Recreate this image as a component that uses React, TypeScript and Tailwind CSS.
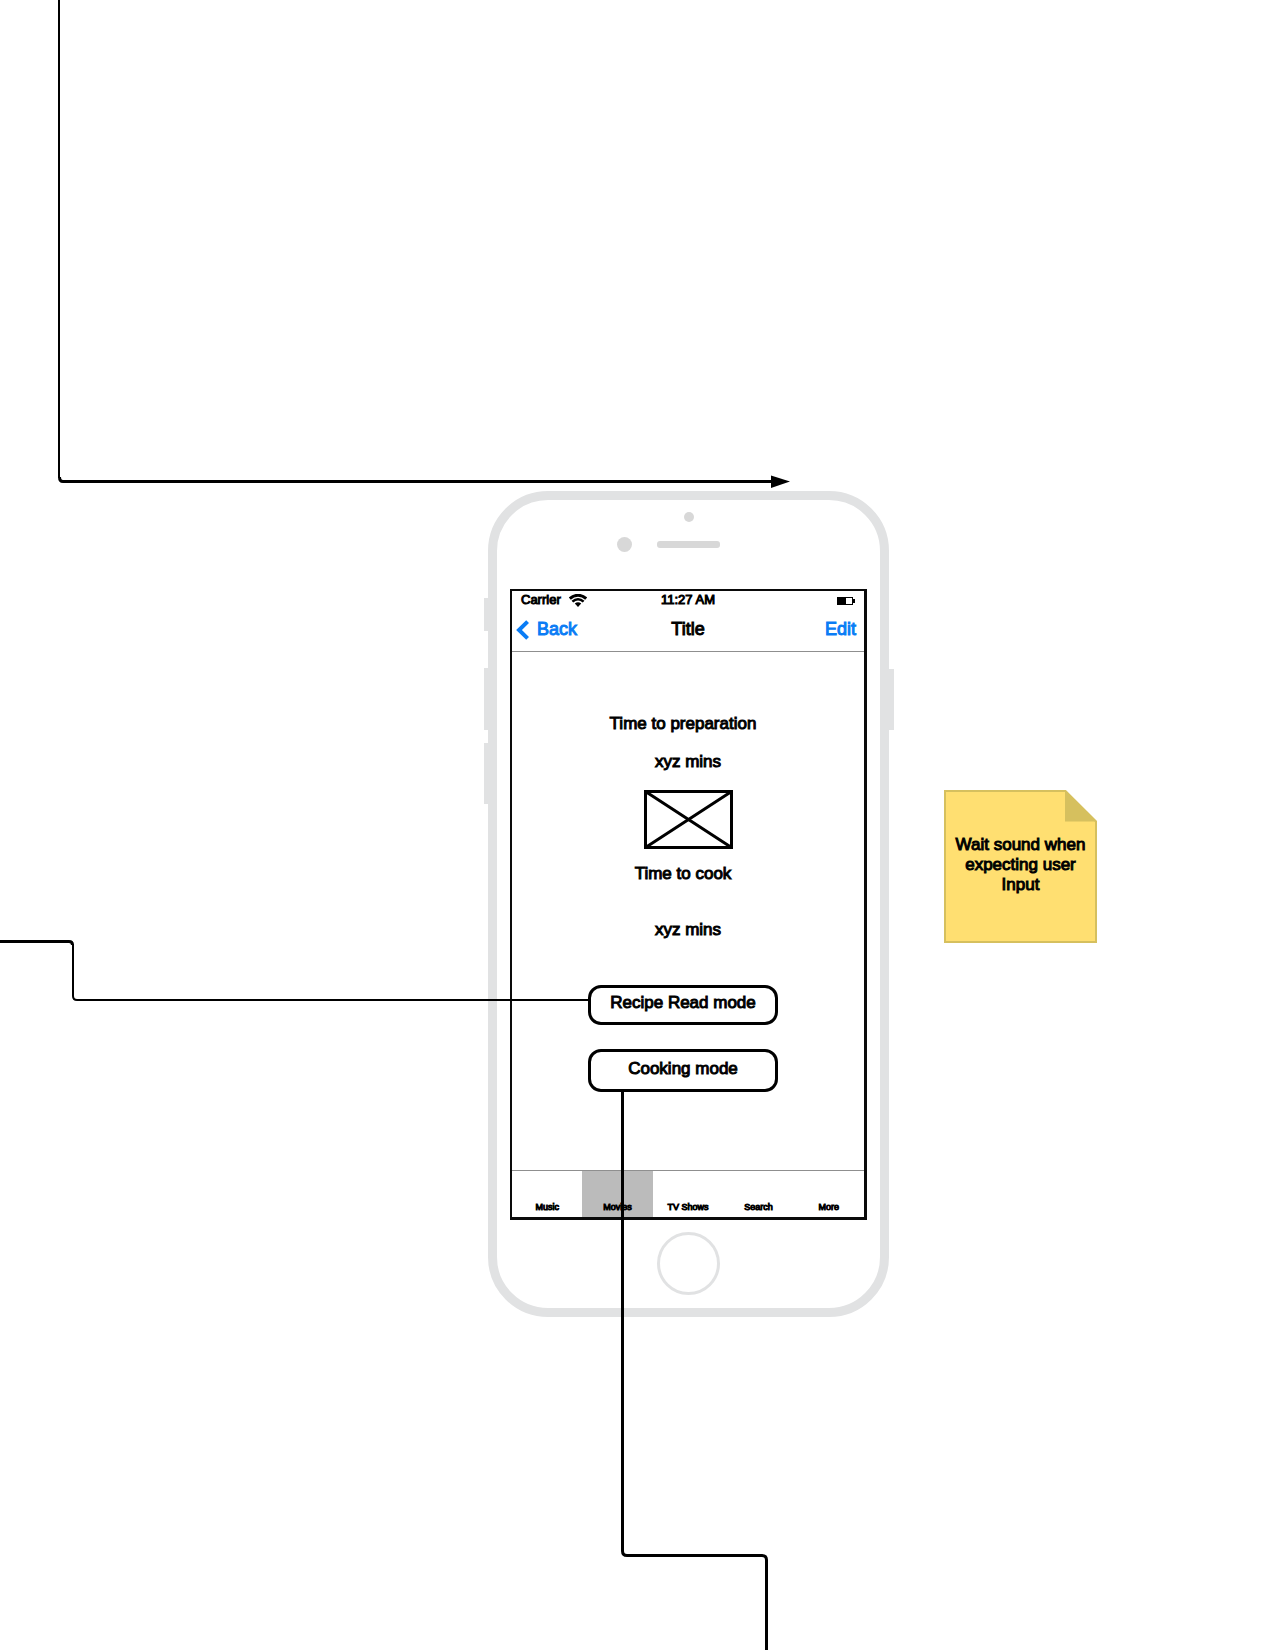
import type { ReactNode } from 'react';

function WifiIcon() {
  return (
    <svg className="h-[13px] w-[18px]" viewBox="0 0 18 13" fill="none" stroke="black" aria-hidden="true">
      <path d="M0.8 4.6 C5.5 0.2 12.5 0.2 17.2 4.6" strokeWidth="3" />
      <path d="M3.4 7.6 C6.8 4.6 11.2 4.6 14.6 7.6" strokeWidth="2.6" />
      <path d="M5.8 9.6 C7.8 7.9 10.2 7.9 12.2 9.6 L9 13 Z" fill="black" stroke="none" />
    </svg>
  );
}

function BatteryIcon() {
  return (
    <svg className="h-[8px] w-[18px]" viewBox="0 0 18 8" aria-hidden="true">
      <rect x="0.5" y="0.5" width="15" height="7" fill="white" stroke="black" />
      <rect x="0" y="0" width="9" height="8" fill="black" />
      <rect x="16" y="2" width="2" height="4" fill="black" />
    </svg>
  );
}

function StatusBar() {
  return (
    <div className="grid h-[18px] grid-cols-3 items-center px-[9px] text-[13px] leading-[18px]">
      <div className="flex items-center gap-2">
        <span>Carrier</span>
        <WifiIcon />
      </div>
      <span className="text-center">11:27 AM</span>
      <div className="flex justify-end pt-px">
        <BatteryIcon />
      </div>
    </div>
  );
}

function NavBar() {
  return (
    <header className="grid h-[43px] grid-cols-3 items-center border-b border-[#8f8f8f] px-1 pb-[2px] text-[18px] leading-5">
      <button type="button" className="flex items-center gap-2 text-[#0a7cf5]">
        <svg className="mt-[2px] h-5 w-[13px]" viewBox="0 0 13 20" fill="none" stroke="currentColor" strokeWidth="4" aria-hidden="true">
          <path d="M11.6 1.6 L3 10 L11.6 18.4" />
        </svg>
        Back
      </button>
      <h1 className="text-center">Title</h1>
      <button type="button" className="justify-self-end pr-1 text-[#0a7cf5]">
        Edit
      </button>
    </header>
  );
}

function ModeButton({ size, children }: { size: string; children: ReactNode }) {
  return (
    <button type="button" className={`w-[190px] rounded-[13px] border-[3px] border-black bg-white pb-1 ${size}`}>
      {children}
    </button>
  );
}

function RecipeTimes() {
  return (
    <main className="flex flex-col items-center pt-[62px] pb-[78px] text-[17px] leading-5">
      <h2 className="pr-[10px]">Time to preparation</h2>
      <p className="mt-[18px]">xyz mins</p>
      <svg className="mt-[18px] h-[59px] w-[89px]" viewBox="0 0 89 59" fill="none" stroke="black" strokeWidth="3" role="img" aria-label="Image placeholder">
        <path d="M1.5 1.5 H87.5 V57.5 H1.5 Z M1.5 1.5 L87.5 57.5 M87.5 1.5 L1.5 57.5" />
      </svg>
      <h2 className="mt-[15px] pr-[10px]">Time to cook</h2>
      <p className="mt-9">xyz mins</p>
      <div className="mt-[45px] flex flex-col gap-6 pr-[10px]">
        <ModeButton size="h-10">Recipe Read mode</ModeButton>
        <ModeButton size="h-[43px]">Cooking mode</ModeButton>
      </div>
    </main>
  );
}

const tabs = ['Music', 'Movies', 'TV Shows', 'Search', 'More'];

function TabBar() {
  return (
    <nav className="grid h-[47px] grid-cols-5 border-t border-[#8f8f8f] text-[9px] leading-3">
      {tabs.map((tab) => (
        <button
          key={tab}
          type="button"
          className={tab === 'Movies' ? 'flex items-end justify-center bg-[#bbbbbb] pb-1' : 'flex items-end justify-center pb-1'}
        >
          {tab}
        </button>
      ))}
    </nav>
  );
}

function Phone() {
  return (
    <section className="relative w-[401px] rounded-[60px] border-[9px] border-[#e1e2e3] bg-white px-[13px] pt-3 pb-[13px]">
      <span className="absolute top-[98px] -left-[13px] h-[33px] w-1 bg-[#e1e2e3]" />
      <span className="absolute top-[168px] -left-[13px] h-[62px] w-1 bg-[#e1e2e3]" />
      <span className="absolute top-[243px] -left-[13px] h-[61px] w-1 bg-[#e1e2e3]" />
      <span className="absolute top-[169px] -right-[14px] h-[61px] w-[5px] bg-[#e1e2e3]" />
      <div className="mx-auto size-[10px] rounded-full bg-[#d8d8d8]" />
      <div className="mt-[15px] mb-[37px] flex items-center justify-center gap-[25px] pr-10">
        <span className="size-[15px] rounded-full bg-[#d8d8d8]" />
        <span className="h-[7px] w-[63px] rounded-[3px] bg-[#d8d8d8]" />
      </div>
      <div className="border-t-2 border-r-[3px] border-b-[3px] border-l-2 border-[#0a0a0a]">
        <StatusBar />
        <NavBar />
        <RecipeTimes />
        <TabBar />
      </div>
      <button type="button" aria-label="Home" className="mx-auto mt-3 block size-[63px] rounded-full border-[3px] border-[#e1e2e3]" />
    </section>
  );
}

function StickyNote() {
  return (
    <aside className="relative h-[153px] w-[153px]">
      <svg className="absolute inset-0 size-full" viewBox="0 0 153 153" aria-hidden="true">
        <path d="M1 1 H121.5 L152 31.5 V152 H1 Z" fill="#ffdf71" stroke="#d6c05e" strokeWidth="2" />
        <path d="M121 0 L153 31.5 H121 Z" fill="#d6c05e" />
      </svg>
      <p className="relative px-2 pt-[45px] text-center text-[17px] leading-5">Wait sound when expecting user Input</p>
    </aside>
  );
}

function Connectors() {
  return (
    <svg className="pointer-events-none absolute inset-0 size-full" fill="none" stroke="black" aria-hidden="true">
      <path d="M59 0 V478" strokeWidth="2" />
      <path d="M59.5 477 Q59.5 481.5 63 481.5 H772" strokeWidth="3" />
      <path d="M771 475.5 L790 481.5 L771 488 Z" fill="black" stroke="none" />
      <path d="M0 941.5 H69 Q72.5 941.5 72.5 945" strokeWidth="3" />
      <path d="M73 944 V996 Q73 1000 77 1000 H589" strokeWidth="2" />
      <path d="M622.5 1091 V1551 Q622.5 1555.5 627 1555.5 H762 Q766.5 1555.5 766.5 1560 V1650" strokeWidth="3" />
    </svg>
  );
}

export default function App() {
  return (
    <div className="relative min-h-screen overflow-hidden bg-white font-['Liberation_Sans',Arial,sans-serif] text-black [-webkit-text-stroke:1px]">
      <div className="absolute top-[491px] left-[488px]">
        <Phone />
      </div>
      <div className="absolute top-[790px] left-[944px]">
        <StickyNote />
      </div>
      <Connectors />
    </div>
  );
}
